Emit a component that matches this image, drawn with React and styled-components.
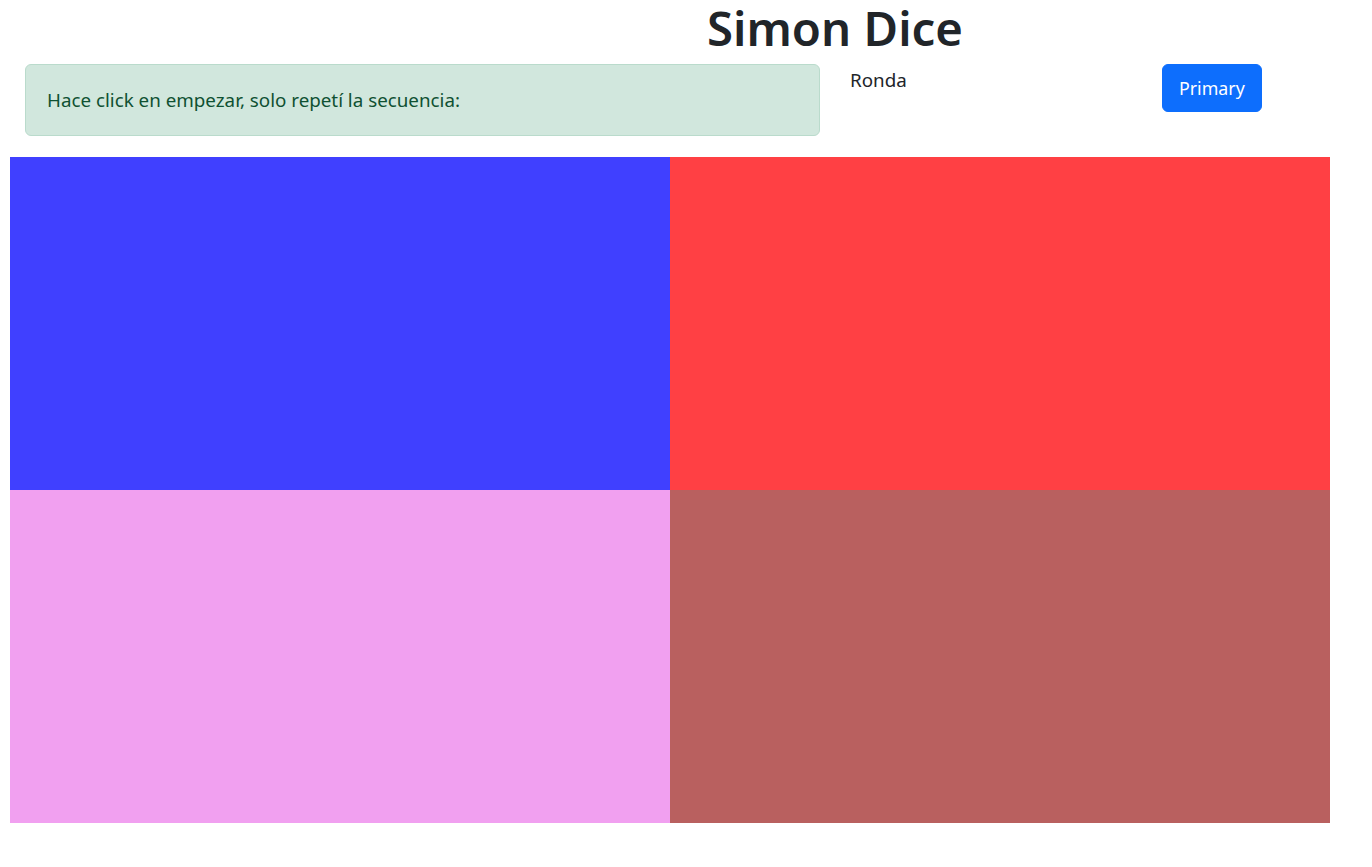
import React from 'react';
import styled, { createGlobalStyle } from 'styled-components';

const GlobalStyle = createGlobalStyle`
    body {
        margin: 0;
        background: #fff;
        color: #212529;
        font-family: "Noto Sans", "Open Sans", sans-serif;
        font-size: 18.8px;
        line-height: 24px;
    }
`;

const Page = styled.div`
    width: 1372px;
    padding-bottom: 44px;
`;

const TitleRow = styled.div`
    display: flex;
    justify-content: center;
    padding-left: 298px;
`;

const Title = styled.h1`
    margin: 0;
    font-size: 47.3px;
    font-weight: 600;
    line-height: 56px;
    color: #212529;
`;

const Header = styled.div`
    display: flex;
    align-items: flex-start;
    padding: 8px 0 0 25px;
`;

const Alert = styled.div`
    box-sizing: border-box;
    width: 795px;
    height: 72px;
    padding: 23px 21px;
    background: #d1e7dd;
    border: 1px solid #badbcc;
    border-radius: 6px;
    color: #0f5132;
`;

const Round = styled.div`
    width: 312px;
    padding: 4px 0 0 30px;
`;

const Button = styled.button`
    box-sizing: border-box;
    height: 48px;
    padding: 8px 16px;
    border: 1px solid #0d6efd;
    border-radius: 6px;
    background: #0d6efd;
    color: #fff;
    font-family: inherit;
    font-size: 17.8px;
    line-height: 30px;
    cursor: pointer;
`;

const Board = styled.div`
    display: grid;
    grid-template-columns: 660px 660px;
    grid-template-rows: 333px 333px;
    margin: 21px 0 0 10px;
`;

const Pad = styled.div`
    background: ${(p) => p.color};
    cursor: pointer;
`;

const pads = ['#4040ff', '#ff4044', '#f1a0f0', '#b9605f'];

const App = () => {
    return (
        <Page>
            <GlobalStyle />
            <TitleRow>
                <Title>Simon Dice</Title>
            </TitleRow>
            <Header>
                <Alert>Hace click en empezar, solo repetí la secuencia:</Alert>
                <Round>Ronda</Round>
                <Button>Primary</Button>
            </Header>
            <Board>
                {pads.map((c) => (
                    <Pad key={c} color={c} />
                ))}
            </Board>
        </Page>
    );
};

export default App;
